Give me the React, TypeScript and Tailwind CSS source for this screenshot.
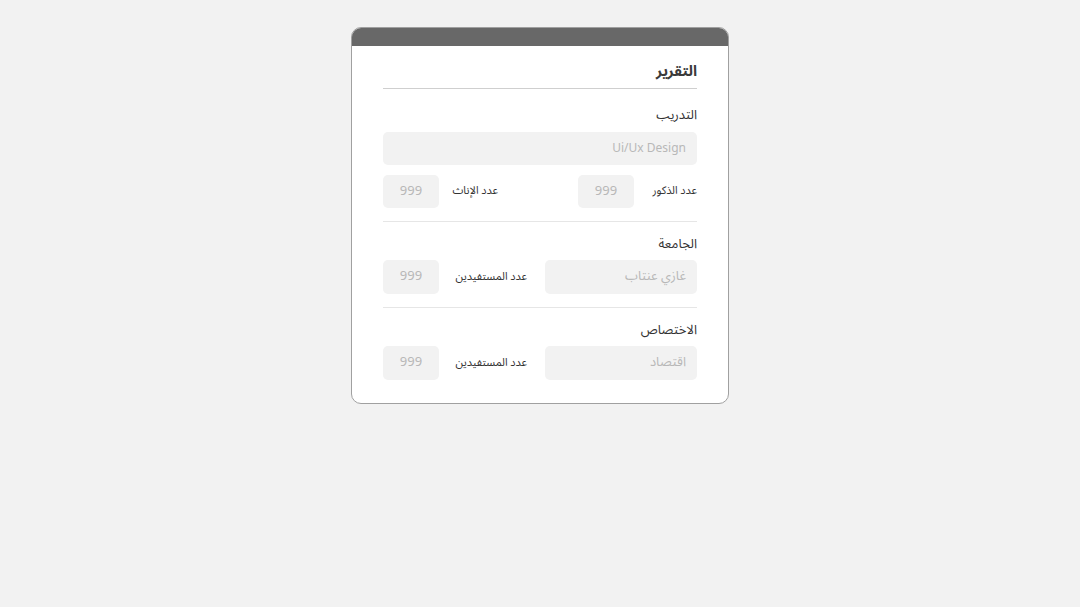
export default function App() {
  const font = { fontFamily: '"Noto Sans Arabic", "DejaVu Sans", "Noto Sans", sans-serif' };
  return (
    <div dir="rtl" style={font} className="min-h-[607px] w-full bg-[#f2f2f2] pt-[27px]">
      <div className="mx-auto w-[378px] overflow-hidden rounded-[10px] border border-[#a0a0a0] bg-white">
        <div className="h-[18px] bg-[#686868]" />
        <div className="px-[31px] pb-[23px] pt-[14px]">
          {/* Title */}
          <div className="border-b border-[#cfcfcf] pb-[6px]">
            <h1 className="text-[15px] font-bold leading-[22px] text-[#3a3a3a]">التقرير</h1>
          </div>

          {/* Training */}
          <div className="mt-[17px] text-[13px] leading-[18px] text-[#333]">التدريب</div>
          <div className="mt-[8px] flex h-[33px] items-center rounded-[5px] bg-[#f2f2f2] px-[11px] text-[12px] text-[#b8b8b8]">
            Ui/Ux Design
          </div>
          <div className="mt-[10px] flex h-[33px] items-center">
            <span className="w-[63px] text-[11px] text-[#333]">عدد الذكور</span>
            <div className="flex h-[33px] w-[56px] items-center justify-center rounded-[5px] bg-[#f2f2f2] text-[13px] text-[#b8b8b8]">999</div>
            <div className="w-[80px]" />
            <span className="w-[59px] text-[11px] text-[#333]">عدد الإناث</span>
            <div className="flex h-[33px] w-[56px] items-center justify-center rounded-[5px] bg-[#f2f2f2] text-[13px] text-[#b8b8b8]">999</div>
          </div>
          <div className="mt-[13px] border-t border-[#e6e6e6]" />

          {/* University */}
          <div className="mt-[13px] text-[13px] leading-[18px] text-[#333]">الجامعة</div>
          <div className="mt-[7px] flex h-[34px] items-center">
            <div className="flex h-[34px] w-[152px] items-center rounded-[5px] bg-[#f2f2f2] px-[11px] text-[13px] text-[#b8b8b8]">غازي عنتاب</div>
            <div className="w-[18px]" />
            <span className="w-[88px] text-[11px] text-[#333]">عدد المستفيدين</span>
            <div className="flex h-[34px] w-[56px] items-center justify-center rounded-[5px] bg-[#f2f2f2] text-[13px] text-[#b8b8b8]">999</div>
          </div>
          <div className="mt-[13px] border-t border-[#e6e6e6]" />

          {/* Specialty */}
          <div className="mt-[13px] text-[13px] leading-[18px] text-[#333]">الاختصاص</div>
          <div className="mt-[7px] flex h-[34px] items-center">
            <div className="flex h-[34px] w-[152px] items-center rounded-[5px] bg-[#f2f2f2] px-[11px] text-[13px] text-[#b8b8b8]">اقتصاد</div>
            <div className="w-[18px]" />
            <span className="w-[88px] text-[11px] text-[#333]">عدد المستفيدين</span>
            <div className="flex h-[34px] w-[56px] items-center justify-center rounded-[5px] bg-[#f2f2f2] text-[13px] text-[#b8b8b8]">999</div>
          </div>
        </div>
      </div>
    </div>
  );
}
